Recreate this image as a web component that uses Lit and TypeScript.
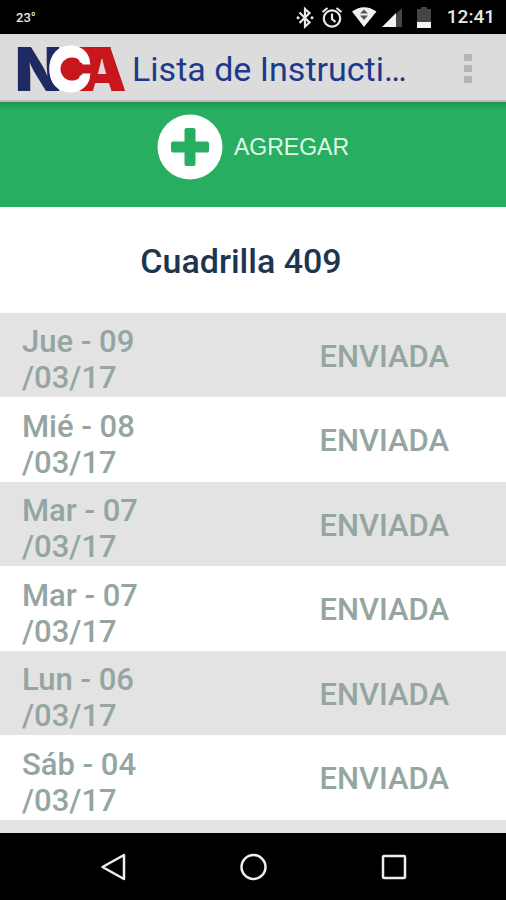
import { LitElement, html, css, svg } from "lit";
import { customElement } from "lit/decorators.js";

interface Entry {
  day: string;
  rest: string;
  status: string;
}

const ENTRIES: Entry[] = [
  { day: "Jue - 09", rest: "/03/17", status: "ENVIADA" },
  { day: "Mié - 08", rest: "/03/17", status: "ENVIADA" },
  { day: "Mar - 07", rest: "/03/17", status: "ENVIADA" },
  { day: "Mar - 07", rest: "/03/17", status: "ENVIADA" },
  { day: "Lun - 06", rest: "/03/17", status: "ENVIADA" },
  { day: "Sáb - 04", rest: "/03/17", status: "ENVIADA" },
  { day: "", rest: "", status: "" },
];

@customElement("status-bar")
export class StatusBar extends LitElement {
  static styles = css`
    :host {
      display: flex;
      align-items: center;
      height: 34px;
      padding: 0 11px 0 16px;
      background: #000;
      color: #e8e8e8;
      font-family: Roboto, sans-serif;
      font-weight: 500;
    }
    .temp { flex: 1; font-size: 13px; }
    .icons { width: 140px; height: 34px; margin-right: 13px; }
    .clock { font-size: 19px; line-height: 36px; }
  `;
  render() {
    return html`
      <span class="temp">23°</span>
      <svg class="icons" viewBox="294 0 140 34" role="img" aria-label="Bluetooth, alarma, wifi, señal, batería">
        <path d="M299.500 12.500L309.500 22.500L305 26.500V9L309.500 13L299.500 23" fill="none" stroke="#e8e8e8" stroke-width="2.200" />
        <circle cx="298" cy="17.700" r="1.500" fill="#e8e8e8" />
        <circle cx="312" cy="17.700" r="1.500" fill="#e8e8e8" />
        <g fill="none" stroke="#e8e8e8" stroke-width="2.200">
          <circle cx="332" cy="18.500" r="8.200" />
          <path d="M332 13.500V19L335.500 22M322.500 12L327.500 8M341.500 12L336.500 8" />
        </g>
        <path d="M352 11.500Q364 3 376.500 11.500L364 27Z" fill="#f0f0f0" />
        <path d="M364 9.500L368 13.500H360ZM364 20L368 15.500H360Z" fill="#555" />
        <path d="M402 8V27H396V14Z" fill="#444" />
        <path d="M382 27L396 13V27Z" fill="#f2f2f2" />
        <path d="M417 9H421V7H427V9H431V22H417Z" fill="#444" />
        <path d="M417 22H431V28H417Z" fill="#f2f2f2" />
      </svg>
      <time class="clock">12:41</time>
    `;
  }
}

@customElement("app-bar")
export class AppBar extends LitElement {
  static styles = css`
    :host {
      display: flex;
      align-items: center;
      box-sizing: border-box;
      height: 68px;
      padding: 3px 24px 0 16px;
      background: #dcdcdc;
      border-bottom: 2px solid #bdbdbd;
      font-family: Roboto, sans-serif;
    }
    .logo { width: 112px; height: 48px; flex: none; overflow: visible; }
    .mark { font-family: Inter, sans-serif; font-weight: 900; font-size: 61px; }
    .ring { font-weight: 700; }
    .title {
      flex: 1;
      margin: 0 0 0 4px;
      font-size: 34px;
      font-weight: 400;
      line-height: 42px;
      color: #1d3a8a;
      white-space: nowrap;
    }
    .menu {
      display: flex;
      flex-direction: column;
      gap: 4px;
      padding: 8px 10px;
      border: 0;
      background: none;
    }
    .dot { width: 8px; height: 7px; background: #b5b5b5; }
  `;
  render() {
    return html`
      <svg class="logo" viewBox="16 44 112 48" role="img" aria-label="NCA">
        <text class="mark" x="15" y="90" fill="#1f2a63">N</text>
        <path d="M71 46H111L100 60L94 82L86 84L71 80Z" fill="#c8161d" />
        <text class="mark" x="78" y="90" fill="#c8161d">A</text>
        <circle cx="71" cy="68" r="20" fill="#fff" />
        <circle cx="72" cy="68" r="11.500" fill="#c8161d" />
        <path d="M72 63.500H96V72.500H72Z" fill="#c8161d" />
        <text class="mark ring" x="47" y="90" fill="#fff" stroke="#fff" stroke-width="1">C</text>
      </svg>
      <h1 class="title">Lista de Instructi…</h1>
      <button class="menu" aria-label="Más opciones">
        <span class="dot"></span><span class="dot"></span><span class="dot"></span>
      </button>
    `;
  }
}

@customElement("nav-bar")
export class NavBar extends LitElement {
  static styles = css`
    :host {
      display: grid;
      grid-template-columns: repeat(3, 140px);
      justify-content: center;
      align-items: center;
      height: 67px;
      flex: none;
      background: #000;
    }
    .key { display: grid; place-items: center; height: 48px; padding: 0; border: 0; background: none; }
    .glyph { width: 30px; height: 30px; fill: none; stroke: #eee; stroke-width: 2.5; }
  `;
  private key(label: string, shape: unknown) {
    return html`<button class="key" aria-label=${label}>
      <svg class="glyph" viewBox="0 0 30 30">${shape}</svg>
    </button>`;
  }
  render() {
    return html`
      ${this.key("Atrás", svg`<path d="M26 3V27L4.500 15Z" stroke-linejoin="round" />`)}
      ${this.key("Inicio", svg`<circle cx="15.500" cy="15" r="12" />`)}
      ${this.key("Recientes", svg`<rect x="5" y="4" width="22" height="22" rx="1" />`)}
    `;
  }
}

@customElement("app-root")
export class AppRoot extends LitElement {
  static styles = css`
    :host {
      display: flex;
      flex-direction: column;
      height: 100vh;
      background: #fff;
      font-family: Roboto, sans-serif;
    }
    .page { flex: 1; min-height: 0; overflow: hidden; }
    .add {
      display: flex;
      align-items: flex-start;
      justify-content: center;
      gap: 11px;
      box-sizing: border-box;
      width: 100%;
      height: 105px;
      padding: 12px 0 0;
      border: 0;
      background: linear-gradient(#1f9150, #27ae60 8px);
      color: #e2f8e9;
      font-family: "Liberation Sans", Arial, sans-serif;
      font-size: 23px;
      line-height: 66px;
    }
    .plus { width: 66px; height: 66px; }
    .crew {
      margin: 0;
      padding: 34px 24px 32px 0;
      text-align: center;
      font-size: 34px;
      font-weight: 500;
      line-height: 40px;
      color: #1c3550;
    }
    .list {
      width: 100%;
      border-collapse: collapse;
      table-layout: fixed;
      color: #95a5a1;
      font-size: 31px;
      line-height: 36px;
    }
    .row { height: 85px; }
    .row:nth-child(odd) { height: 84px; background: #e3e3e3; }
    .date { padding: 11px 0 1px 22px; text-align: left; font-weight: 500; }
    .status { padding: 3px 57px 0 0; text-align: right; font-weight: 500; }
    .line { display: block; }
  `;
  render() {
    return html`
      <status-bar></status-bar>
      <app-bar></app-bar>
      <main class="page">
        <button class="add">
          <svg class="plus" viewBox="0 0 66 66" aria-hidden="true">
            <circle cx="33" cy="33" r="32.500" fill="#fff" />
            <rect x="27.500" y="14" width="11" height="38" rx="2" fill="#27ae60" />
            <rect x="14" y="27.500" width="38" height="11" rx="2" fill="#27ae60" />
          </svg>
          <span>AGREGAR</span>
        </button>
        <h2 class="crew">Cuadrilla 409</h2>
        <table class="list" aria-label="Cuadrilla 409">
          <tbody>
            ${ENTRIES.map(
              (e) => html`<tr class="row">
                <td class="date"><span class="line">${e.day}</span><span class="line">${e.rest}</span></td>
                <td class="status">${e.status}</td>
              </tr>`
            )}
          </tbody>
        </table>
      </main>
      <nav-bar></nav-bar>
    `;
  }
}
